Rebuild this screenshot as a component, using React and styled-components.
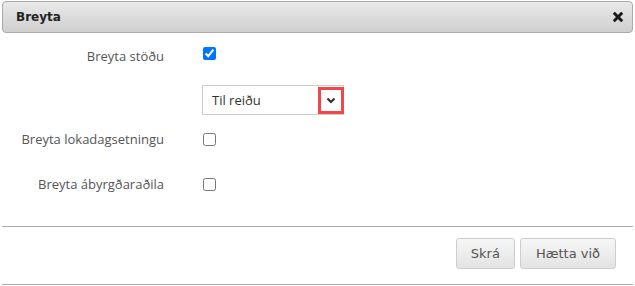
import React from "react";
import styled, { createGlobalStyle } from "styled-components";

const Global = createGlobalStyle`
  html, body { margin: 0; padding: 0; background: #fff; }
  * { box-sizing: border-box; }
`;

const Dialog = styled.div`
  width: 635px;
  height: 285px;
  padding: 1px 2px 0;
  display: flex;
  flex-direction: column;
  background: #fff;
`;

const TitleBar = styled.div`
  height: 32px;
  flex: none;
  border: 1px solid #aaa;
  border-radius: 4px;
  background: linear-gradient(#e9e9e9, #cfcfcf);
  display: flex;
  align-items: center;
  justify-content: space-between;
  padding: 0 9px 0 13px;
`;

const Title = styled.span`
  font-family: "DejaVu Sans", Verdana, sans-serif;
  font-weight: bold;
  font-size: 12px;
  color: #222;
`;

const CloseButton = styled.button`
  border: 0;
  background: none;
  padding: 0;
  width: 10px;
  height: 10px;
  display: flex;
  align-items: center;
  justify-content: center;
  cursor: pointer;
`;

const Content = styled.div`
  flex: 1;
  display: flex;
  flex-direction: column;
`;

const Row = styled.div`
  display: grid;
  grid-template-columns: 162px 1fr;
  column-gap: 38px;
  align-items: center;
  height: 30px;
  margin-top: ${(p) => p.$gap}px;
`;

const Label = styled.label`
  text-align: right;
  font-family: "Open Sans", sans-serif;
  font-size: 13px;
  color: #555;
  padding-top: ${(p) => p.$shift || 0}px;
`;

const Check = styled.input.attrs({ type: "checkbox" })`
  width: 13px;
  height: 13px;
  margin: 0 0 0 1px;
  justify-self: start;
`;

const Select = styled.div`
  width: 142px;
  height: 30px;
  border: 1px solid #ccc;
  display: flex;
  align-items: center;
  justify-content: space-between;
  padding: 0 0 0 9px;
  font-family: "Open Sans", sans-serif;
  font-size: 13px;
  color: #333;
  background: #fff;
`;

const ArrowBox = styled.span`
  width: 26px;
  height: 27px;
  margin-right: -1px;
  border: 3px solid #f2474a;
  display: flex;
  align-items: center;
  justify-content: center;
`;

const ButtonPane = styled.div`
  flex: none;
  border-top: 1px solid #aaa;
  border-bottom: 1px solid #aaa;
  padding: 11px 17px 15px 0;
  display: flex;
  justify-content: flex-end;
  gap: 5px;
`;

const Button = styled.button`
  height: 31px;
  padding: 0 ${(p) => p.$pad || 15}px;
  border: 1px solid #cdcdcd;
  border-radius: 3px;
  background: linear-gradient(#f6f6f6, #e3e3e3);
  font-family: "DejaVu Sans", Verdana, sans-serif;
  font-size: 13px;
  color: #555;
  cursor: pointer;
`;

export default function App() {
  return (
    <>
      <Global />
      <Dialog>
        <TitleBar>
          <Title>Breyta</Title>
          <CloseButton aria-label="Loka">
            <svg width="10" height="10" viewBox="0 0 10 10">
              <path d="M1.8 1.8 L8.2 8.2 M8.2 1.8 L1.8 8.2" stroke="#1a1a1a" strokeWidth="3" strokeLinecap="square" />
            </svg>
          </CloseButton>
        </TitleBar>
        <Content>
          <Row $gap={5}>
            <Label $shift={5}>Breyta stöðu</Label>
            <Check defaultChecked />
          </Row>
          <Row $gap={17}>
            <span />
            <Select>
              <span>Til reiðu</span>
              <ArrowBox>
                <svg width="10" height="7" viewBox="0 0 10 7">
                  <path d="M1.5 1.5 L5 5 L8.5 1.5" fill="none" stroke="#333" strokeWidth="2.2" />
                </svg>
              </ArrowBox>
            </Select>
          </Row>
          <Row $gap={9}>
            <Label>Breyta lokadagsetningu</Label>
            <Check />
          </Row>
          <Row $gap={15}>
            <Label>Breyta ábyrgðaraðila</Label>
            <Check />
          </Row>
        </Content>
        <ButtonPane>
          <Button $pad={14}>Skrá</Button>
          <Button>Hætta við</Button>
        </ButtonPane>
      </Dialog>
    </>
  );
}
